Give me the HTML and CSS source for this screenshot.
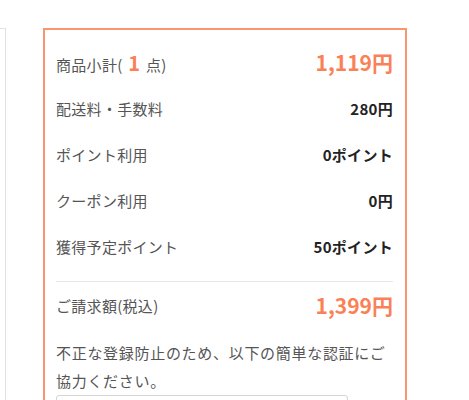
FILE: index.html
```html
<!DOCTYPE html>
<html lang="ja">
<head>
<meta charset="utf-8">
<link rel="stylesheet" href="styles.css">
</head>
<body>
<div class="page">
  <div class="side"></div>
  <div class="summary">
    <div class="row">
      <span class="label">商品小計( <span class="count">1</span> 点)</span>
      <span class="price">1,119円</span>
    </div>
    <div class="row">
      <span class="label">配送料・手数料</span>
      <span class="value">280円</span>
    </div>
    <div class="row">
      <span class="label">ポイント利用</span>
      <span class="value">0ポイント</span>
    </div>
    <div class="row">
      <span class="label">クーポン利用</span>
      <span class="value">0円</span>
    </div>
    <div class="row">
      <span class="label">獲得予定ポイント</span>
      <span class="value">50ポイント</span>
    </div>
    <div class="row total">
      <span class="label">ご請求額(税込)</span>
      <span class="price">1,399円</span>
    </div>
    <p class="note">不正な登録防止のため、以下の簡単な認証にご協力ください。</p>
    <div class="captcha"></div>
  </div>
</div>
</body>
</html>
```
FILE: styles.css
```css
html, body {
  margin: 0;
  padding: 0;
  background: #fff;
}
body {
  font-family: "Noto Sans CJK JP", "Noto Sans", sans-serif;
  color: #555;
  overflow: hidden;
  height: 400px;
}
.page {
  display: flex;
  align-items: flex-start;
  padding-top: 28px;
  gap: 37px;
  height: 372px;
  overflow: hidden;
}
.side {
  width: 6px;
  height: 372px;
  border: 1px solid #e2e2e2;
  border-left: none;
  border-bottom: none;
  box-sizing: border-box;
}
.summary {
  width: 364px;
  box-sizing: border-box;
  border: 2px solid #fb9570;
  border-bottom: none;
  padding: 9px 12px 0 11px;
  height: 372px;
  overflow: hidden;
}
.row {
  display: flex;
  justify-content: space-between;
  align-items: center;
  height: 46px;
  font-size: 15px;
}
.label {
  color: #555;
  letter-spacing: 0.3px;
}
.count {
  color: #fa8157;
  font-size: 20px;
  font-weight: 700;
  padding: 0 2px;
}
.value {
  color: #222;
  font-weight: 700;
  letter-spacing: 0.3px;
}
.price {
  color: #fa8157;
  font-size: 21px;
  font-weight: 700;
}
.total {
  margin-top: 12px;
  border-top: 1px solid #e6e6e6;
}
.note {
  margin: 11px 0 0;
  font-size: 15px;
  line-height: 28px;
  letter-spacing: 0.7px;
  color: #555;
}
.captcha {
  width: 292px;
  height: 40px;
  border: 1px solid #d5d5d5;
  border-radius: 3px;
  box-sizing: border-box;
}
```
